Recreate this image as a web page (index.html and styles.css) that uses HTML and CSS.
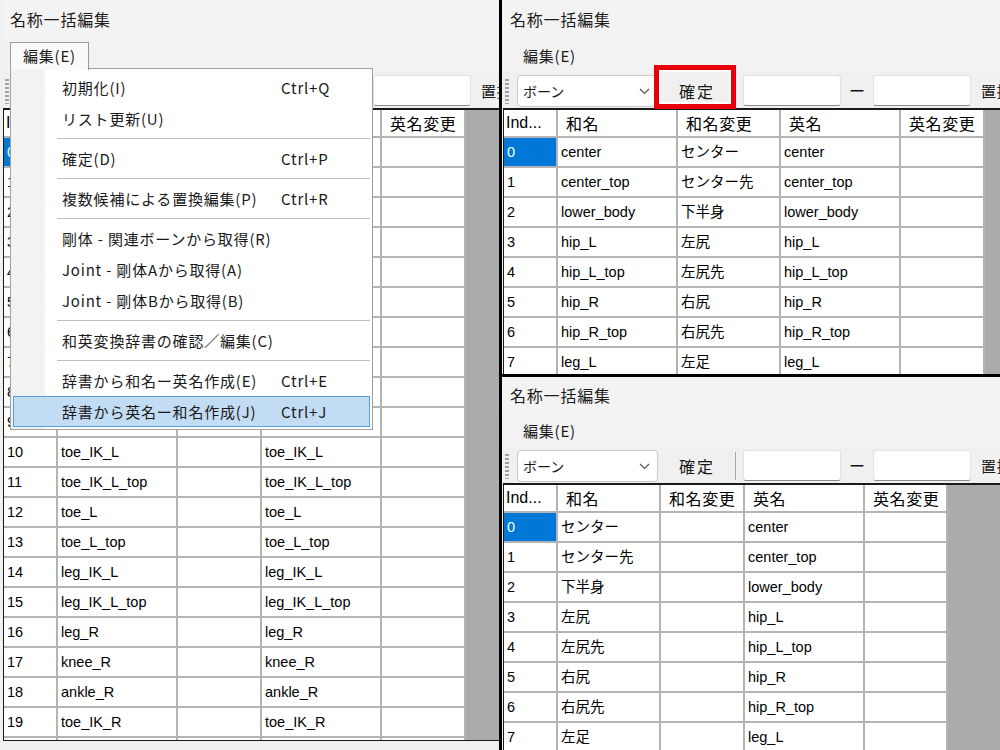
FILE: index.html
```html
<!DOCTYPE html>
<html lang="ja">
<head>
<meta charset="utf-8">
<title>名称一括編集</title>
<link rel="stylesheet" href="styles.css">
</head>
<body>
<div class="screen">
  <section class="win win-left">
    <div class="titlebar">名称一括編集</div>
    <div class="menubar"><span class="menu-tab open">編集(E)</span></div>
    <div class="toolbar">
      <span class="grip"></span>
      <span class="combo"><span>ボーン</span><svg width="11" height="7" viewBox="0 0 11 7"><path d="M1 1l4.5 4.5L10 1" fill="none" stroke="#555" stroke-width="1.2"/></svg></span>
      <span class="btn">確定</span>
      <span class="sep"></span>
      <span class="input"></span>
      <span class="arrow">ー</span>
      <span class="input"></span>
      <span class="label">置換</span>
    </div>
    <div class="grid cols-left grid-left">
      <div class="row head"><span class="c">Ind...</span><span class="c">和名</span><span class="c">和名変更</span><span class="c">英名</span><span class="c">英名変更</span></div>
      <div class="row"><span class="c sel">0</span><span class="c">center</span><span class="c"></span><span class="c">center</span><span class="c"></span></div>
      <div class="row"><span class="c">1</span><span class="c">center_top</span><span class="c"></span><span class="c">center_top</span><span class="c"></span></div>
      <div class="row"><span class="c">2</span><span class="c">lower_body</span><span class="c"></span><span class="c">lower_body</span><span class="c"></span></div>
      <div class="row"><span class="c">3</span><span class="c">hip_L</span><span class="c"></span><span class="c">hip_L</span><span class="c"></span></div>
      <div class="row"><span class="c">4</span><span class="c">hip_L_top</span><span class="c"></span><span class="c">hip_L_top</span><span class="c"></span></div>
      <div class="row"><span class="c">5</span><span class="c">hip_R</span><span class="c"></span><span class="c">hip_R</span><span class="c"></span></div>
      <div class="row"><span class="c">6</span><span class="c">hip_R_top</span><span class="c"></span><span class="c">hip_R_top</span><span class="c"></span></div>
      <div class="row"><span class="c">7</span><span class="c">leg_L</span><span class="c"></span><span class="c">leg_L</span><span class="c"></span></div>
      <div class="row"><span class="c">8</span><span class="c">knee_L</span><span class="c"></span><span class="c">knee_L</span><span class="c"></span></div>
      <div class="row"><span class="c">9</span><span class="c">ankle_L</span><span class="c"></span><span class="c">ankle_L</span><span class="c"></span></div>
      <div class="row"><span class="c">10</span><span class="c">toe_IK_L</span><span class="c"></span><span class="c">toe_IK_L</span><span class="c"></span></div>
      <div class="row"><span class="c">11</span><span class="c">toe_IK_L_top</span><span class="c"></span><span class="c">toe_IK_L_top</span><span class="c"></span></div>
      <div class="row"><span class="c">12</span><span class="c">toe_L</span><span class="c"></span><span class="c">toe_L</span><span class="c"></span></div>
      <div class="row"><span class="c">13</span><span class="c">toe_L_top</span><span class="c"></span><span class="c">toe_L_top</span><span class="c"></span></div>
      <div class="row"><span class="c">14</span><span class="c">leg_IK_L</span><span class="c"></span><span class="c">leg_IK_L</span><span class="c"></span></div>
      <div class="row"><span class="c">15</span><span class="c">leg_IK_L_top</span><span class="c"></span><span class="c">leg_IK_L_top</span><span class="c"></span></div>
      <div class="row"><span class="c">16</span><span class="c">leg_R</span><span class="c"></span><span class="c">leg_R</span><span class="c"></span></div>
      <div class="row"><span class="c">17</span><span class="c">knee_R</span><span class="c"></span><span class="c">knee_R</span><span class="c"></span></div>
      <div class="row"><span class="c">18</span><span class="c">ankle_R</span><span class="c"></span><span class="c">ankle_R</span><span class="c"></span></div>
      <div class="row"><span class="c">19</span><span class="c">toe_IK_R</span><span class="c"></span><span class="c">toe_IK_R</span><span class="c"></span></div>
      <div class="row"><span class="c">20</span><span class="c">toe_IK_R_top</span><span class="c"></span><span class="c">toe_IK_R_top</span><span class="c"></span></div>
    </div>

    <div class="dropdown">
      <div class="mi"><span class="mi-label">初期化(I)</span><span class="mi-key">Ctrl+Q</span></div>
      <div class="mi"><span class="mi-label">リスト更新(U)</span></div>
      <div class="msep"></div>
      <div class="mi"><span class="mi-label">確定(D)</span><span class="mi-key">Ctrl+P</span></div>
      <div class="msep"></div>
      <div class="mi"><span class="mi-label">複数候補による置換編集(P)</span><span class="mi-key">Ctrl+R</span></div>
      <div class="msep"></div>
      <div class="mi"><span class="mi-label">剛体 - 関連ボーンから取得(R)</span></div>
      <div class="mi"><span class="mi-label">Joint - 剛体Aから取得(A)</span></div>
      <div class="mi"><span class="mi-label">Joint - 剛体Bから取得(B)</span></div>
      <div class="msep"></div>
      <div class="mi"><span class="mi-label">和英変換辞書の確認／編集(C)</span></div>
      <div class="msep"></div>
      <div class="mi"><span class="mi-label">辞書から和名ー英名作成(E)</span><span class="mi-key">Ctrl+E</span></div>
      <div class="mi hl"><span class="mi-label">辞書から英名ー和名作成(J)</span><span class="mi-key">Ctrl+J</span></div>
    </div>
  </section>

  <div class="right-col">
    <section class="win win-top">
      <div class="titlebar">名称一括編集</div>
      <div class="menubar"><span class="menu-tab">編集(E)</span></div>
      <div class="toolbar">
        <span class="grip"></span>
        <span class="combo"><span>ボーン</span><svg width="11" height="7" viewBox="0 0 11 7"><path d="M1 1l4.5 4.5L10 1" fill="none" stroke="#555" stroke-width="1.2"/></svg></span>
        <span class="btn btn-marked">確定<span class="mark"></span></span>
        <span class="sep"></span>
        <span class="input"></span>
        <span class="arrow">ー</span>
        <span class="input"></span>
        <span class="label">置換</span>
      </div>
      <div class="grid cols-top">
        <div class="row head"><span class="c">Ind...</span><span class="c">和名</span><span class="c">和名変更</span><span class="c">英名</span><span class="c">英名変更</span></div>
        <div class="row"><span class="c sel">0</span><span class="c">center</span><span class="c">センター</span><span class="c">center</span><span class="c"></span></div>
        <div class="row"><span class="c">1</span><span class="c">center_top</span><span class="c">センター先</span><span class="c">center_top</span><span class="c"></span></div>
        <div class="row"><span class="c">2</span><span class="c">lower_body</span><span class="c">下半身</span><span class="c">lower_body</span><span class="c"></span></div>
        <div class="row"><span class="c">3</span><span class="c">hip_L</span><span class="c">左尻</span><span class="c">hip_L</span><span class="c"></span></div>
        <div class="row"><span class="c">4</span><span class="c">hip_L_top</span><span class="c">左尻先</span><span class="c">hip_L_top</span><span class="c"></span></div>
        <div class="row"><span class="c">5</span><span class="c">hip_R</span><span class="c">右尻</span><span class="c">hip_R</span><span class="c"></span></div>
        <div class="row"><span class="c">6</span><span class="c">hip_R_top</span><span class="c">右尻先</span><span class="c">hip_R_top</span><span class="c"></span></div>
        <div class="row"><span class="c">7</span><span class="c">leg_L</span><span class="c">左足</span><span class="c">leg_L</span><span class="c"></span></div>
      </div>
    </section>

    <section class="win win-bottom">
      <div class="titlebar">名称一括編集</div>
      <div class="menubar"><span class="menu-tab">編集(E)</span></div>
      <div class="toolbar">
        <span class="grip"></span>
        <span class="combo"><span>ボーン</span><svg width="11" height="7" viewBox="0 0 11 7"><path d="M1 1l4.5 4.5L10 1" fill="none" stroke="#555" stroke-width="1.2"/></svg></span>
        <span class="btn">確定</span>
        <span class="sep"></span>
        <span class="input"></span>
        <span class="arrow">ー</span>
        <span class="input"></span>
        <span class="label">置換</span>
      </div>
      <div class="grid cols-bottom">
        <div class="row head"><span class="c">Ind...</span><span class="c">和名</span><span class="c">和名変更</span><span class="c">英名</span><span class="c">英名変更</span></div>
        <div class="row"><span class="c sel">0</span><span class="c">センター</span><span class="c"></span><span class="c">center</span><span class="c"></span></div>
        <div class="row"><span class="c">1</span><span class="c">センター先</span><span class="c"></span><span class="c">center_top</span><span class="c"></span></div>
        <div class="row"><span class="c">2</span><span class="c">下半身</span><span class="c"></span><span class="c">lower_body</span><span class="c"></span></div>
        <div class="row"><span class="c">3</span><span class="c">左尻</span><span class="c"></span><span class="c">hip_L</span><span class="c"></span></div>
        <div class="row"><span class="c">4</span><span class="c">左尻先</span><span class="c"></span><span class="c">hip_L_top</span><span class="c"></span></div>
        <div class="row"><span class="c">5</span><span class="c">右尻</span><span class="c"></span><span class="c">hip_R</span><span class="c"></span></div>
        <div class="row"><span class="c">6</span><span class="c">右尻先</span><span class="c"></span><span class="c">hip_R_top</span><span class="c"></span></div>
        <div class="row"><span class="c">7</span><span class="c">左足</span><span class="c"></span><span class="c">leg_L</span><span class="c"></span></div>
      </div>
    </section>
  </div>
</div>
</body>
</html>
```

FILE: styles.css
```css
* { box-sizing: border-box; }
html, body { margin: 0; padding: 0; }
body {
  width: 1000px;
  height: 750px;
  overflow: hidden;
  background: #000;
  font-family: "Noto Sans CJK JP", "Noto Sans", sans-serif;
  color: #1a1a1a;
}
.screen {
  display: flex;
  width: 1000px;
  height: 750px;
  background: #000;
}
.win {
  position: relative;
  display: flex;
  flex-direction: column;
  background: #f0f0f0;
  overflow: hidden;
}
.win-left { width: 499px; height: 750px; padding-left: 2px; }
.right-col {
  margin-left: 3px;
  width: 498px;
  display: flex;
  flex-direction: column;
  gap: 3px;
}
.win-top { height: 374px; flex: none; }
.win-bottom { height: 373px; flex: none; }

.titlebar {
  flex: none;
  height: 37px;
  padding-left: 8px;
  display: flex;
  align-items: center;
  font-size: 16px;
  letter-spacing: 0.8px;
  background: #f3f3f3;
  color: #1c1c1c;
}
.win-bottom .titlebar { height: 35px; }

.menubar {
  flex: none;
  height: 35px;
  padding-left: 8px;
  display: flex;
  align-items: flex-start;
  background: #f2f2f2;
}
.menu-tab {
  margin-top: 5px;
  height: 28px;
  padding: 0 12px;
  line-height: 26px;
  border: 1px solid transparent;
  font-size: 15px;
  letter-spacing: 0.8px;
}
.menu-tab.open {
  position: relative;
  z-index: 3;
  background: #fafafa;
  border-color: #9a9a9a;
  border-bottom: none;
}

.toolbar {
  flex: none;
  height: 36px;
  padding: 3px 0 0 3px;
  display: flex;
  align-items: flex-start;
  white-space: nowrap;
  background: #f0f0f0;
}
.grip {
  flex: none;
  width: 4px;
  height: 26px;
  margin: 3px 8px 0 0;
  background-image: radial-gradient(circle, #a0a0a0 0.9px, transparent 1.2px);
  background-size: 2px 4px;
}
.combo {
  flex: none;
  width: 141px;
  height: 32px;
  padding: 0 7px 0 5px;
  display: flex;
  align-items: center;
  justify-content: space-between;
  background: #fff;
  border: 1px solid #c8c8c8;
  border-radius: 4px;
  font-size: 14px;
}
.btn {
  position: relative;
  z-index: 1;
  flex: none;
  width: 70px;
  height: 32px;
  margin-left: 3px;
  display: flex;
  align-items: center;
  justify-content: center;
  font-size: 16px;
  letter-spacing: 2px;
  padding-left: 2px;
}
.mark {
  position: absolute;
  left: -7px;
  right: -5px;
  top: -10px;
  bottom: -2px;
  border: 5px solid #e8000b;
  box-shadow: inset 0 0 0 2px #ffffff;
}
.sep {
  flex: none;
  width: 1px;
  height: 28px;
  margin: 2px 0 0 4px;
  background: #a8a8a8;
}
.input {
  flex: none;
  width: 98px;
  height: 31px;
  margin-left: 7px;
  background: #fff;
  border: 1px solid #e2e2e2;
  border-bottom-color: #8c8c8c;
  border-radius: 3px;
}
.arrow {
  flex: none;
  width: 32px;
  text-align: center;
  line-height: 31px;
  font-size: 16px;
  color: #111;
}
.input + .arrow + .input { margin-left: 0; }
.label {
  flex: none;
  margin-left: 10px;
  line-height: 32px;
  font-size: 15px;
  letter-spacing: 0.8px;
}

.grid {
  flex: 1;
  min-height: 0;
  margin-left: 1px;
  overflow: hidden;
  background: #ababab;
  border-top: 2px solid #1a1a1a;
  border-left: 1px solid #1a1a1a;
}
.grid-left {
  margin-bottom: 9px;
  border-bottom: 1px solid #1a1a1a;
}
.row {
  display: grid;
  width: max-content;
}
.cols-left .row { grid-template-columns: 54px 120px 84px 120px 84px; }
.cols-top .row { grid-template-columns: 54px 120px 103px 120px 84px; }
.cols-bottom .row { grid-template-columns: 54px 103px 84px 120px 83px; }

.c {
  display: block;
  height: 30px;
  padding-left: 3px;
  background: #fff;
  border-right: 2px solid #b4b4b4;
  border-bottom: 2px solid #b4b4b4;
  font-family: "Liberation Sans", "Noto Sans CJK JP", sans-serif;
  font-size: 14.5px;
  line-height: 28px;
  color: #000;
  white-space: nowrap;
  overflow: hidden;
}
.head .c {
  height: 28px;
  padding-left: 8px;
  line-height: 26px;
  font-family: "Noto Sans CJK JP", sans-serif;
  font-size: 16px;
  letter-spacing: 0.6px;
}
.head .c:first-child { padding-left: 2px; letter-spacing: 0; font-family: "Liberation Sans", sans-serif; }
.c.sel { background: #0078d7; color: #fff; }

.dropdown {
  position: absolute;
  z-index: 2;
  left: 10px;
  top: 68px;
  width: 363px;
  height: 362px;
  padding: 3px 2px 2px 2px;
  border: 1px solid #a0a0a0;
  background: linear-gradient(90deg, #f2f2f2 34px, #ffffff 34px);
  font-size: 15px;
  letter-spacing: 0.8px;
  color: #1a1a1a;
}
.mi {
  height: 31px;
  padding-left: 49px;
  display: flex;
  align-items: center;
  white-space: nowrap;
}
.mi-label { display: inline-block; width: 219px; }
.mi-key { display: inline-block; }
.mi.hl {
  background: #c2dcf3;
  border: 1px solid #5b9fde;
  padding-left: 48px;
}
.msep {
  height: 9px;
  margin-left: 44px;
  display: flex;
  align-items: center;
}
.msep::after {
  content: "";
  display: block;
  width: 100%;
  height: 1px;
  background: #bdbdbd;
}
```
